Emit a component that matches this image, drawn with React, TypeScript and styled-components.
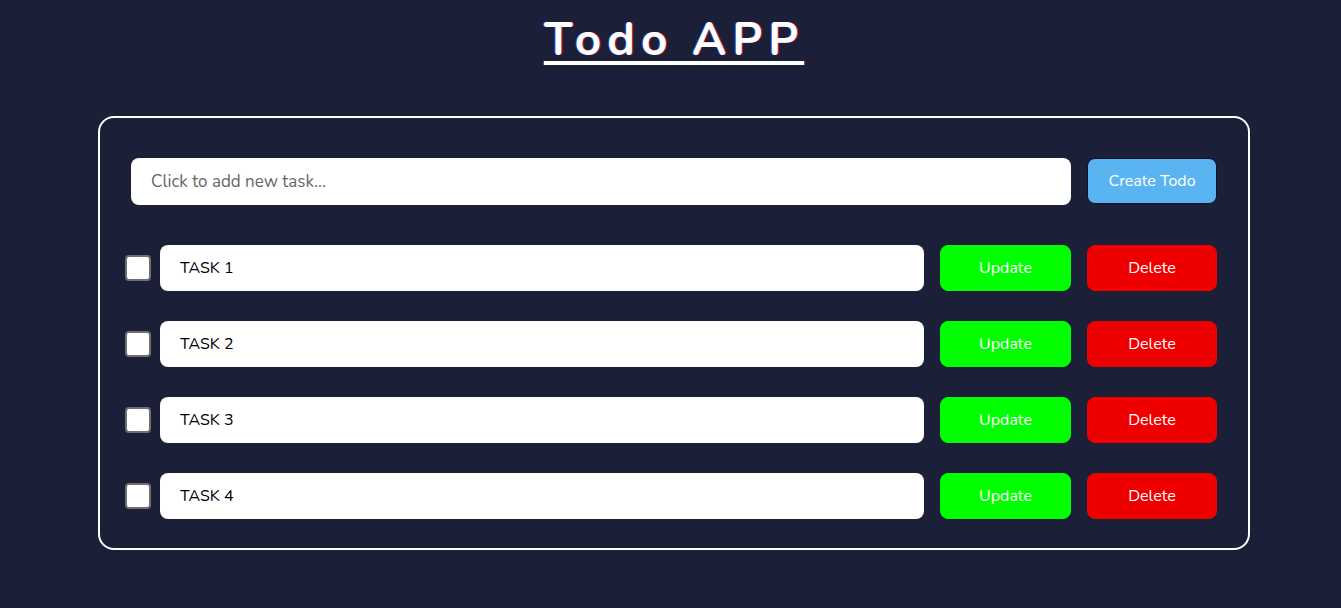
import React from "react";
import styled, { createGlobalStyle } from "styled-components";

const Global = createGlobalStyle`
  html, body { margin: 0; padding: 0; background: #1b1f38; }
  body { font-family: "Nunito", "Lato", "Open Sans", sans-serif; }
  * { box-sizing: border-box; }
`;

const Page = styled.div`
  min-height: 608px;
  padding: 0 91px 0 98px;
  background: #1b1f38;
  display: flex;
  flex-direction: column;
  align-items: stretch;
`;

const Title = styled.h1`
  margin: 12px 0 0;
  text-align: center;
  color: #fff;
  font-size: 46px;
  font-weight: 700;
  letter-spacing: 6px;
  line-height: 56px;
  text-decoration: underline;
  text-decoration-thickness: 4px;
  text-underline-offset: 6px;
  text-shadow: 1px 0 rgba(208, 16, 58, 0.8), -1px 0 rgba(42, 95, 216, 0.6);
`;

const Card = styled.div`
  margin-top: 48px;
  border: 2px solid #fff;
  border-radius: 16px;
  padding: 40px 31px 29px 25px;
  display: flex;
  flex-direction: column;
  gap: 30px;
`;

const AddRow = styled.div`
  display: flex;
  gap: 16px;
  padding-left: 6px;
  margin-bottom: 10px;
`;

const TextBox = styled.input<{ $size?: number; $h?: number }>`
  flex: 1;
  height: ${(p) => p.$h ?? 47}px;
  border: none;
  border-radius: 8px;
  background: #fff;
  padding: 0 20px;
  font-family: inherit;
  font-size: ${(p) => p.$size ?? 16}px;
  color: #000;
  outline: none;
  &::placeholder { color: #666; }
`;

const Btn = styled.button<{ $bg: string; $w: number; $edge?: string }>`
  width: ${(p) => p.$w}px;
  height: 46px;
  border: 1px solid ${(p) => p.$edge ?? p.$bg};
  border-radius: 8px;
  background: ${(p) => p.$bg};
  color: #fff;
  font-family: inherit;
  font-size: 16px;
  cursor: pointer;
  flex-shrink: 0;
`;

const Row = styled.div`
  display: flex;
  align-items: center;
  gap: 16px;
`;

const Check = styled.input`
  appearance: none;
  width: 26px;
  height: 26px;
  margin: 0 -7px 0 0;
  background: #fff;
  border: 2px solid #6f6f6f;
  border-radius: 4px;
  flex-shrink: 0;
`;

const tasks = ["TASK 1", "TASK 2", "TASK 3", "TASK 4"];

export default function App() {
  return (
    <Page>
      <Global />
      <Title>Todo APP</Title>
      <Card>
        <AddRow>
          <TextBox $size={17} placeholder="Click to add new task..." />
          <Btn $bg="#5ab4f2" $edge="#0d1230" $w={130}>Create Todo</Btn>
        </AddRow>
        {tasks.map((t) => (
          <Row key={t}>
            <Check type="checkbox" />
            <TextBox $h={46} defaultValue={t} />
            <Btn $bg="#00ff00" $w={131}>Update</Btn>
            <Btn $bg="#ee0000" $w={130}>Delete</Btn>
          </Row>
        ))}
      </Card>
    </Page>
  );
}
